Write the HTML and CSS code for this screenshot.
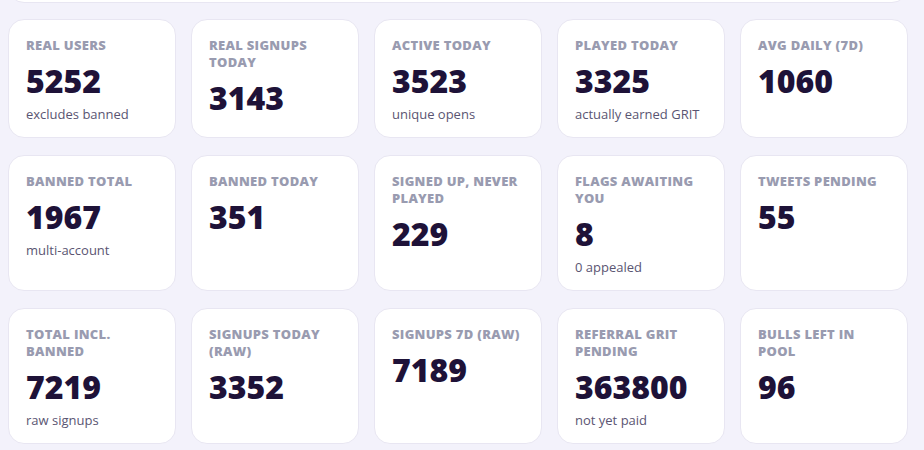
FILE: index.html
```html
<!DOCTYPE html>
<html lang="en">
  <head>
    <meta charset="UTF-8" />
    <meta name="viewport" content="width=device-width, initial-scale=1.0" />
    <title>Stats</title>
    <link rel="stylesheet" href="styles.css">
  </head>
  <body>
    <div class="page">
      <div class="panel"></div>

      <div class="stats">
        <div class="stat">
          <div class="stat-label">Real users</div>
          <div class="stat-value">5252</div>
          <div class="stat-sub">excludes banned</div>
        </div>
        <div class="stat">
          <div class="stat-label">Real signups today</div>
          <div class="stat-value">3143</div>
        </div>
        <div class="stat">
          <div class="stat-label">Active today</div>
          <div class="stat-value">3523</div>
          <div class="stat-sub">unique opens</div>
        </div>
        <div class="stat">
          <div class="stat-label">Played today</div>
          <div class="stat-value">3325</div>
          <div class="stat-sub">actually earned GRIT</div>
        </div>
        <div class="stat">
          <div class="stat-label">Avg daily (7d)</div>
          <div class="stat-value">1060</div>
        </div>

        <div class="stat">
          <div class="stat-label">Banned total</div>
          <div class="stat-value">1967</div>
          <div class="stat-sub">multi-account</div>
        </div>
        <div class="stat">
          <div class="stat-label">Banned today</div>
          <div class="stat-value">351</div>
        </div>
        <div class="stat">
          <div class="stat-label">Signed up, never played</div>
          <div class="stat-value">229</div>
        </div>
        <div class="stat">
          <div class="stat-label">Flags awaiting you</div>
          <div class="stat-value">8</div>
          <div class="stat-sub">0 appealed</div>
        </div>
        <div class="stat">
          <div class="stat-label">Tweets pending</div>
          <div class="stat-value">55</div>
        </div>

        <div class="stat">
          <div class="stat-label">Total incl. banned</div>
          <div class="stat-value">7219</div>
          <div class="stat-sub">raw signups</div>
        </div>
        <div class="stat">
          <div class="stat-label">Signups today (raw)</div>
          <div class="stat-value">3352</div>
        </div>
        <div class="stat">
          <div class="stat-label">Signups 7d (raw)</div>
          <div class="stat-value">7189</div>
        </div>
        <div class="stat">
          <div class="stat-label">Referral GRIT pending</div>
          <div class="stat-value">363800</div>
          <div class="stat-sub">not yet paid</div>
        </div>
        <div class="stat">
          <div class="stat-label">Bulls left in pool</div>
          <div class="stat-value">96</div>
        </div>
      </div>
    </div>
  </body>
</html>
```

FILE: styles.css
```css
body {
  margin: 0;
  background: #f3f2fb;
  font-family: "Open Sans", "Noto Sans", sans-serif;
}

.page {
  width: 900px;
  padding: 0 8px;
}

.panel {
  height: 100px;
  margin-top: -97px;
  margin-bottom: 16px;
  background: #fff;
  border: 1px solid #e8e6f2;
  border-radius: 16px;
  box-sizing: border-box;
}

.stats {
  display: grid;
  grid-template-columns: repeat(5, 1fr);
  column-gap: 15px;
  row-gap: 17px;
}

.stat {
  background: #fff;
  border: 1px solid #e8e6f2;
  border-radius: 16px;
  padding: 17px 17px 14px;
}

.stat-label {
  font-size: 13px;
  line-height: 17px;
  font-weight: 800;
  letter-spacing: 0.3px;
  text-transform: uppercase;
  color: #999bb0;
}

.stat-value {
  margin-top: 9px;
  font-size: 32px;
  line-height: 36px;
  font-weight: 800;
  color: #1e1238;
}

.stat-sub {
  margin-top: 7px;
  font-size: 13px;
  line-height: 17px;
  color: #5a5572;
}
```
